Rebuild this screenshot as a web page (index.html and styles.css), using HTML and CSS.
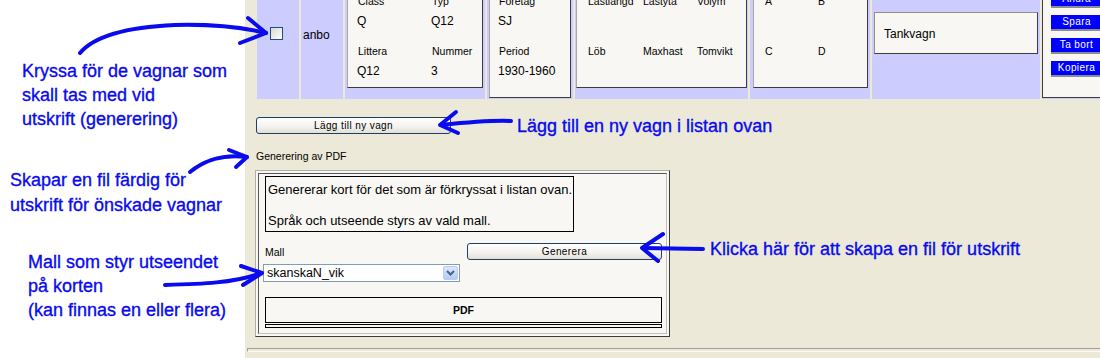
FILE: index.html
```html
<!DOCTYPE html>
<html lang="sv">
<head>
    <meta charset="UTF-8">
    <title>Vagnkort - generering</title>
    <link rel="stylesheet" href="styles.css">
</head>
<body>
<div class="page">

    <!-- Annotations on the left -->
    <div class="notes">
        <p class="note note-check">Kryssa för de vagnar som<br>skall tas med vid<br>utskrift (generering)</p>
        <p class="note note-pdf">Skapar en fil färdig för<br>utskrift för önskade vagnar</p>
        <p class="note note-mall">Mall som styr utseendet<br>på korten<br>(kan finnas en eller flera)</p>
    </div>

    <div class="app">

        <!-- Wagon row -->
        <div class="wagon-row">
            <div class="cell cell-check"><input type="checkbox" class="xp-check"></div>
            <div class="cell cell-owner">anbo</div>
            <div class="cell cell-id">
                <div class="card">
                    <div class="fields cols-id">
                        <div class="field"><span class="lbl">Class</span><span class="val">Q</span></div>
                        <div class="field"><span class="lbl">Typ</span><span class="val">Q12</span></div>
                        <div class="field"><span class="lbl">Littera</span><span class="val">Q12</span></div>
                        <div class="field"><span class="lbl">Nummer</span><span class="val">3</span></div>
                    </div>
                </div>
            </div>
            <div class="cell cell-firm">
                <div class="card card-firm">
                    <div class="fields">
                        <div class="field"><span class="lbl">Företag</span><span class="val">SJ</span></div>
                        <div class="field"><span class="lbl">Period</span><span class="val">1930-1960</span></div>
                    </div>
                </div>
            </div>
            <div class="cell cell-load">
                <div class="card card-load">
                    <div class="fields cols-load">
                        <div class="field"><span class="lbl">Lastlängd</span><span class="val">&nbsp;</span></div>
                        <div class="field"><span class="lbl">Lastyta</span><span class="val">&nbsp;</span></div>
                        <div class="field"><span class="lbl">Volym</span><span class="val">&nbsp;</span></div>
                        <div class="field"><span class="lbl">Löb</span><span class="val">&nbsp;</span></div>
                        <div class="field"><span class="lbl">Maxhast</span><span class="val">&nbsp;</span></div>
                        <div class="field"><span class="lbl">Tomvikt</span><span class="val">&nbsp;</span></div>
                    </div>
                </div>
            </div>
            <div class="cell cell-class">
                <div class="card card-class">
                    <div class="fields cols-class">
                        <div class="field"><span class="lbl">A</span><span class="val">&nbsp;</span></div>
                        <div class="field"><span class="lbl">B</span><span class="val">&nbsp;</span></div>
                        <div class="field"><span class="lbl">C</span><span class="val">&nbsp;</span></div>
                        <div class="field"><span class="lbl">D</span><span class="val">&nbsp;</span></div>
                    </div>
                </div>
            </div>
            <div class="cell cell-type">
                <div class="type-box">Tankvagn</div>
            </div>
            <div class="cell cell-actions">
                <div class="actions">
                    <button class="blue-btn">Ändra</button>
                    <button class="blue-btn">Spara</button>
                    <button class="blue-btn">Ta bort</button>
                    <button class="blue-btn">Kopiera</button>
                </div>
            </div>
        </div>

        <div class="add-row">
            <button class="xp-btn">Lägg till ny vagn</button>
            <p class="note note-add">Lägg till en ny vagn i listan ovan</p>
        </div>

        <div class="section-label">Generering av PDF</div>

        <div class="pdf-row">
            <div class="gen-box">
                <div class="gen-inner">
                    <div class="info-box">
                        <p>Genererar kort för det som är förkryssat i listan ovan.</p>
                        <p>Språk och utseende styrs av vald mall.</p>
                    </div>
                    <div class="mall-row">
                        <div class="mall-field">
                            <div class="lbl-mall">Mall</div>
                            <div class="combo">
                                <select>
                                    <option>skanskaN_vik</option>
                                </select>
                                <span class="combo-btn">
                                    <svg width="9" height="6" viewBox="0 0 9 6"><path d="M1 1 L4.5 4.5 L8 1" fill="none" stroke="#4d6185" stroke-width="2"/></svg>
                                </span>
                            </div>
                        </div>
                        <button class="xp-btn">Generera</button>
                    </div>
                    <div class="pdf-btn">PDF</div>
                    <div class="pdf-gap"></div>
                </div>
            </div>
            <p class="note note-gen">Klicka här för att skapa en fil för utskrift</p>
        </div>

        <div class="rule"></div>
    </div>

    <!-- Hand drawn arrows -->
    <svg class="arrows" width="1100" height="358" viewBox="0 0 1100 358">
        <g fill="none" stroke="#0a0aef" stroke-width="4" stroke-linecap="round" stroke-linejoin="round">
            <path d="M80 53 C95 35 130 27 175 25 C215 24 245 28 266 33"/>
            <path d="M248 18 L266 33 L240 43"/>
            <path d="M511 121 C490 120 470 122 441 125"/>
            <path d="M456 112 L440 125 L458 133"/>
            <path d="M190 172 C205 160 222 154 247 157"/>
            <path d="M229 150 L247 157 L236 167"/>
            <path d="M165 285 C200 284 235 283 261 273"/>
            <path d="M241 266 L262 273 L243 285"/>
            <path d="M703 249 L643 248"/>
            <path d="M663 234 L642 248 L658 261"/>
        </g>
    </svg>
</div>
</body>
</html>
```

FILE: styles.css
```css
body {
    margin: 0;
    background: #fff;
    font-family: "Liberation Sans", Arial, sans-serif;
    color: #000;
}
.page {
    position: relative;
    display: flex;
    width: 1100px;
    height: 358px;
    overflow: hidden;
}

/* annotations */
.notes {
    flex: none;
    width: 245px;
    background: #fff;
}
.note {
    margin: 0;
    color: #0a0aef;
    font-size: 18px;
    line-height: 24px;
    white-space: nowrap;
    -webkit-text-stroke: 0.35px #0a0aef;
}
.note-check {
    margin-top: 59px;
    padding-left: 22px;
}
.note-pdf {
    margin-top: 37px;
    padding-left: 10px;
    line-height: 25px;
}
.note-mall {
    margin-top: 32px;
    padding-left: 28px;
}
.note-add {
    margin-left: 66px;
}
.note-gen {
    margin: 67px 0 0 40px;
}
.arrows {
    position: absolute;
    top: 0;
    left: 0;
    pointer-events: none;
}

/* main area */
.app {
    flex: 1;
    min-width: 0;
    background: #ece9d8;
    padding-left: 10px;
    overflow: hidden;
}
.wagon-row {
    display: flex;
    gap: 2px;
    height: 117px;
    margin-top: -16px;
    padding: 0 2px 2px;
    box-sizing: border-box;
}
.cell {
    flex: none;
    background: #ccccff;
    padding: 1px 2px 0;
    box-sizing: border-box;
}
.cell-check {
    width: 42px;
    padding: 43px 0 0 13px;
}
.cell-owner {
    width: 42px;
    padding: 43px 0 0 2px;
    font-size: 12px;
    line-height: 16px;
}
.cell-id { width: 140px; }
.cell-firm { width: 86px; }
.cell-load {
    width: 173px;
    padding: 1px 1px 0;
}
.cell-class {
    width: 120px;
    padding: 1px 2px 0 3px;
}
.cell-type {
    width: 168px;
    padding-top: 28px;
}
.cell-actions {
    width: 80px;
    padding: 1px 0 0;
}

.xp-check {
    appearance: none;
    display: block;
    width: 13px;
    height: 13px;
    margin: 0;
    border: 1px solid #1c5180;
    background: linear-gradient(135deg, #d8d7d0, #f4f4f0 70%, #fff);
}

.card {
    background: #f8f7f3;
    border: 1px solid;
    border-color: #a9a8a2 #3c3c3c #3c3c3c #a9a8a2;
    padding: 8px 0 8px 9px;
}
.card-firm {
    padding-left: 8px;
    padding-bottom: 18px;
}
.card-load,
.card-class {
    padding-left: 10px;
}
.fields {
    display: grid;
    row-gap: 15px;
}
.cols-id { grid-template-columns: 74px 50px; }
.cols-load { grid-template-columns: 55px 54px 50px; }
.cols-class { grid-template-columns: 53px 40px; }
.field {
    display: flex;
    flex-direction: column;
}
.lbl {
    font-size: 10.5px;
    line-height: 14px;
    padding-left: 1px;
    white-space: nowrap;
}
.val {
    margin-top: 5px;
    font-size: 12px;
    line-height: 16px;
    white-space: nowrap;
}

.type-box {
    background: #f8f7f3;
    border: 1px solid;
    border-color: #8f8e89 #3c3c3c #3c3c3c #8f8e89;
    padding: 13px 9px 11px;
    font-size: 12px;
    line-height: 16px;
}

.actions {
    height: 113px;
    box-sizing: border-box;
    background: #f8f7f3;
    border: 1px solid;
    border-color: #a9a8a2 #3c3c3c #3c3c3c #3c3c3c;
    padding: 6px 0 0 8px;
}
.blue-btn {
    display: block;
    width: 51px;
    height: 16px;
    box-sizing: border-box;
    margin: 0 0 7px;
    padding: 0;
    border: 0;
    border-bottom: 2px solid #8d8d8d;
    background: #0000ff;
    color: #fff;
    font-family: "Liberation Sans", Arial, sans-serif;
    font-size: 10px;
    line-height: 14px;
    letter-spacing: 0.4px;
    text-align: center;
}

.xp-btn {
    width: 195px;
    height: 17px;
    box-sizing: border-box;
    padding: 0;
    border: 1px solid #1f3f66;
    border-radius: 3px;
    background: linear-gradient(#ffffff, #f4f3ef 55%, #e2dfd5);
    color: #000;
    font-family: "Liberation Sans", Arial, sans-serif;
    font-size: 10px;
    letter-spacing: 0.4px;
}

.add-row {
    display: flex;
    align-items: center;
    margin-top: 12.5px;
}
.add-row .xp-btn {
    margin-left: 1px;
}

.section-label {
    margin: 12.5px 0 0 1px;
    font-size: 10.5px;
    line-height: 13px;
}

.pdf-row {
    display: flex;
    align-items: flex-start;
    margin-top: 7px;
}
.gen-box {
    display: flex;
    width: 415px;
    height: 167px;
    box-sizing: border-box;
    padding: 2px;
    background: #f8f7f3;
    border: 1px solid;
    border-color: #b0aea6 #3c3c3c #3c3c3c #b0aea6;
}
.gen-inner {
    flex: 1;
    display: flex;
    flex-direction: column;
    padding: 2px 4px 5px 6px;
    border: 1px solid;
    border-color: #555 #c2c0b8 #c2c0b8 #555;
}
.info-box {
    width: 309px;
    height: 56px;
    box-sizing: border-box;
    padding: 5px 2px 0;
    border: 1px solid #000;
    font-size: 13px;
    line-height: 15.5px;
}
.info-box p {
    margin: 0;
    white-space: nowrap;
}
.info-box p + p {
    margin-top: 15.5px;
}
.mall-row {
    display: flex;
    justify-content: space-between;
    align-items: flex-start;
    margin: 11px 0 0 -2px;
}
.lbl-mall {
    margin: 3px 0 0 2px;
    font-size: 10.5px;
    line-height: 13px;
}
.combo {
    display: flex;
    width: 197px;
    height: 18px;
    box-sizing: border-box;
    margin-top: 5px;
    border: 1px solid #7f9db9;
    background: #fff;
}
.combo select {
    flex: 1;
    min-width: 0;
    appearance: none;
    margin: 0;
    padding: 0 0 0 3px;
    border: 0;
    outline: none;
    background: transparent;
    color: #000;
    font-family: "Liberation Sans", Arial, sans-serif;
    font-size: 12.5px;
}
.combo-btn {
    display: flex;
    align-items: center;
    justify-content: center;
    width: 15px;
    height: 14px;
    box-sizing: border-box;
    margin: 1px;
    border: 1px solid #b8cbf2;
    border-radius: 2px;
    background: linear-gradient(#dde7fd, #b5caf7);
}
.pdf-btn {
    display: flex;
    align-items: center;
    justify-content: center;
    height: 26px;
    box-sizing: border-box;
    margin-top: 15px;
    border: 1px solid #000;
    font-size: 10.5px;
    font-weight: bold;
}
.pdf-gap {
    height: 4px;
    box-sizing: border-box;
    margin-top: 1px;
    border: 1px solid #000;
}

.rule {
    height: 2px;
    margin: 11px 0 0 -8px;
    border-top: 1px solid #a3a196;
    border-left: 1px solid #a3a196;
    border-bottom: 1px solid #fbfaf6;
}
```
